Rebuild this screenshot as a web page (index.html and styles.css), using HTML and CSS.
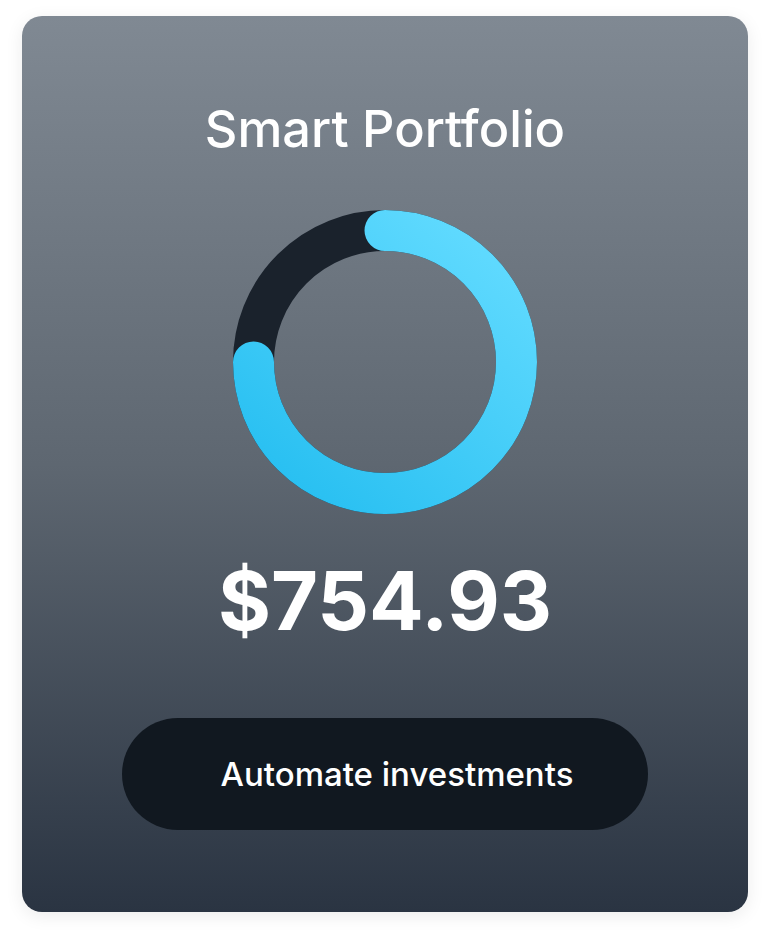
FILE: index.html
```html
<!DOCTYPE html>
<html lang="en">
<head>
<meta charset="utf-8">
<title>Smart Portfolio</title>
<link rel="stylesheet" href="styles.css">
</head>
<body>
<div class="page">
  <section class="card">
    <h1 class="title">Smart Portfolio</h1>
    <svg class="ring" width="304" height="304" viewBox="0 0 304 304" aria-hidden="true">
      <defs>
        <linearGradient id="blue" x1="270" y1="30" x2="60" y2="290" gradientUnits="userSpaceOnUse">
          <stop offset="0" stop-color="#62dbff"/>
          <stop offset="1" stop-color="#27bff1"/>
        </linearGradient>
      </defs>
      <circle cx="152" cy="152" r="131.5" fill="none" stroke="#1a222c" stroke-width="41"/>
      <path d="M152 20.5 A131.5 131.5 0 1 1 20.5 152" fill="none" stroke="url(#blue)" stroke-width="41" stroke-linecap="round"/>
    </svg>
    <div class="amount">$754.93</div>
    <button class="cta" type="button">Automate investments</button>
  </section>
</div>
</body>
</html>
```
FILE: styles.css
```css
html, body {
  margin: 0;
  padding: 0;
  background: #ffffff;
}
.page {
  padding: 16px 22px 29px;
}
.card {
  box-sizing: border-box;
  width: 726px;
  height: 896px;
  border-radius: 20px;
  background: linear-gradient(180deg, #808993 0%, #5e6771 50%, #2a3442 100%);
  box-shadow: 0 4px 18px rgba(0, 0, 0, 0.08);
  display: flex;
  flex-direction: column;
  align-items: center;
  padding-top: 83px;
  font-family: Inter, "Noto Sans", sans-serif;
  color: #ffffff;
}
.title {
  margin: 0;
  font-size: 50.5px;
  line-height: 60px;
  font-weight: 500;
}
.ring {
  display: block;
  margin-top: 51px;
}
.amount {
  margin-top: 39px;
  font-size: 81px;
  line-height: 96px;
  font-weight: 700;
}
.cta {
  margin-top: 69px;
  width: 526px;
  height: 112px;
  border: none;
  border-radius: 56px;
  background: #111820;
  color: #ffffff;
  font-family: Inter, "Noto Sans", sans-serif;
  font-size: 33px;
  font-weight: 500;
  padding: 0 0 0 24px;
}
```
